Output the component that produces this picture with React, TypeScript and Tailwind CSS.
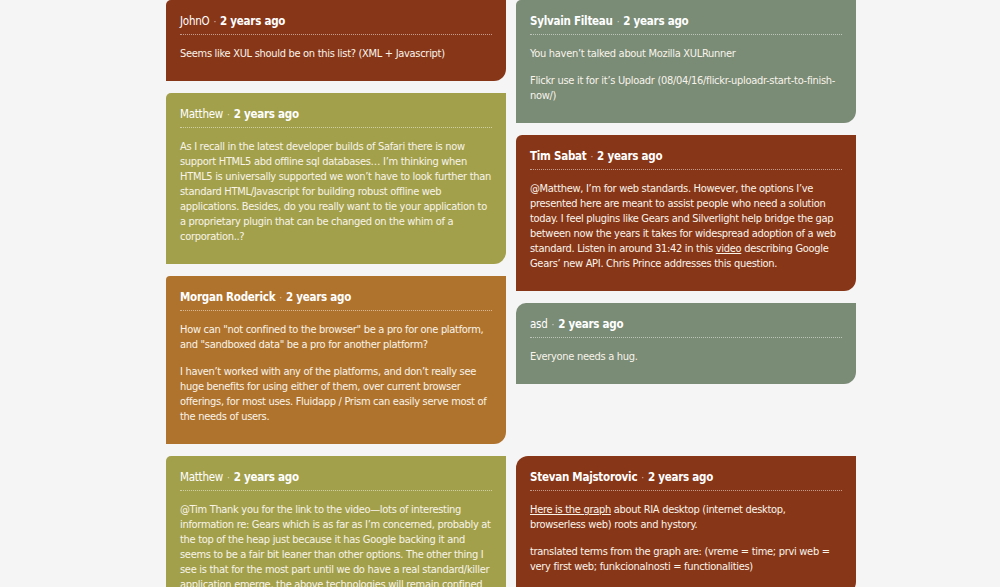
import type { ReactNode } from "react"

type Comment = {
  name: string
  bold?: boolean
  bg: string
  corner: string
  body: ReactNode[]
}

const left: Comment[] = [
  {
    name: "JohnO",
    bg: "bg-[#883618]",
    corner: "rounded-tl-[5px]",
    body: ["Seems like XUL should be on this list? (XML + Javascript)"],
  },
  {
    name: "Matthew",
    bg: "bg-[#a3a04b]",
    corner: "rounded-tl-[5px]",
    body: [
      "As I recall in the latest developer builds of Safari there is now support HTML5 abd offline sql databases… I’m thinking when HTML5 is universally supported we won’t have to look further than standard HTML/Javascript for building robust offline web applications. Besides, do you really want to tie your application to a proprietary plugin that can be changed on the whim of a corporation..?",
    ],
  },
  {
    name: "Morgan Roderick",
    bold: true,
    bg: "bg-[#b0732d]",
    corner: "rounded-tl-[4px]",
    body: [
      "How can \"not confined to the browser\" be a pro for one platform, and \"sandboxed data\" be a pro for another platform?",
      "I haven’t worked with any of the platforms, and don’t really see huge benefits for using either of them, over current browser offerings, for most uses. Fluidapp / Prism can easily serve most of the needs of users.",
    ],
  },
]

const right: Comment[] = [
  {
    name: "Sylvain Filteau",
    bold: true,
    bg: "bg-[#7a8b76]",
    corner: "rounded-tl-[5px]",
    body: [
      "You haven’t talked about Mozilla XULRunner",
      "Flickr use it for it’s Uploadr (08/04/16/flickr-uploadr-start-to-finish-now/)",
    ],
  },
  {
    name: "Tim Sabat",
    bold: true,
    bg: "bg-[#883618]",
    corner: "rounded-tl-[6px]",
    body: [
      <>
        @Matthew, I’m for web standards. However, the options I’ve presented here are meant to assist people who need a
        solution today. I feel plugins like Gears and Silverlight help bridge the gap between now the years it takes for
        widespread adoption of a web standard. Listen in around 31:42 in this <a className="underline">video</a>{" "}
        describing Google Gears’ new API. Chris Prince addresses this question.
      </>,
    ],
  },
  {
    name: "asd",
    bg: "bg-[#7a8b76]",
    corner: "rounded-tl-[10px]",
    body: ["Everyone needs a hug."],
  },
]

const bottom: Comment[] = [
  {
    name: "Matthew",
    bg: "bg-[#a3a04b]",
    corner: "rounded-tl-[5px]",
    body: [
      "@Tim Thank you for the link to the video—lots of interesting information re: Gears which is as far as I’m concerned, probably at the top of the heap just because it has Google backing it and seems to be a fair bit leaner than other options. The other thing I see is that for the most part until we do have a real standard/killer application emerge, the above technologies will remain confined to a fairly small niche of developers and users.",
    ],
  },
  {
    name: "Stevan Majstorovic",
    bold: true,
    bg: "bg-[#883618]",
    corner: "rounded-tl-[12px]",
    body: [
      <>
        <a className="underline">Here is the graph</a> about RIA desktop (internet desktop, browserless web) roots and
        hystory.
      </>,
      "translated terms from the graph are: (vreme = time; prvi web = very first web; funkcionalnosti = functionalities)",
    ],
  },
]

function Card({ c }: { c: Comment }) {
  return (
    <div className={`w-[340px] ${c.bg} ${c.corner} rounded-br-[12px] px-[14px] pt-3 pb-5`}>
      <div className="border-b border-dotted border-white/50 pb-[3px] text-[11.5px] leading-[18px] tracking-[-0.25px] text-white">
        <span className={c.bold ? "font-bold" : ""}>{c.name}</span>
        <span className="mx-[4px] text-[10px] text-white/70">·</span>
        <span className="font-bold">2 years ago</span>
      </div>
      <div className="mt-[11px] space-y-3 text-[11px] leading-[15px] tracking-[-0.3px] text-[#f8f4ea]">
        {c.body.map((p, i) => (
          <p key={i}>{p}</p>
        ))}
      </div>
    </div>
  )
}

export default function App() {
  return (
    <div className="min-h-screen bg-[#f5f5f5] font-['DejaVu_Sans_Condensed','DejaVu_Sans',sans-serif] font-stretch-condensed">
      <div className="ml-[166px] w-[690px]">
        <div className="flex items-start gap-[10px]">
          <div className="flex flex-col gap-3">
            {left.map((c, i) => (
              <Card key={i} c={c} />
            ))}
          </div>
          <div className="flex flex-col gap-3">
            {right.map((c, i) => (
              <Card key={i} c={c} />
            ))}
          </div>
        </div>
        <div className="mt-3 flex items-start gap-[10px]">
          {bottom.map((c, i) => (
            <Card key={i} c={c} />
          ))}
        </div>
      </div>
    </div>
  )
}
